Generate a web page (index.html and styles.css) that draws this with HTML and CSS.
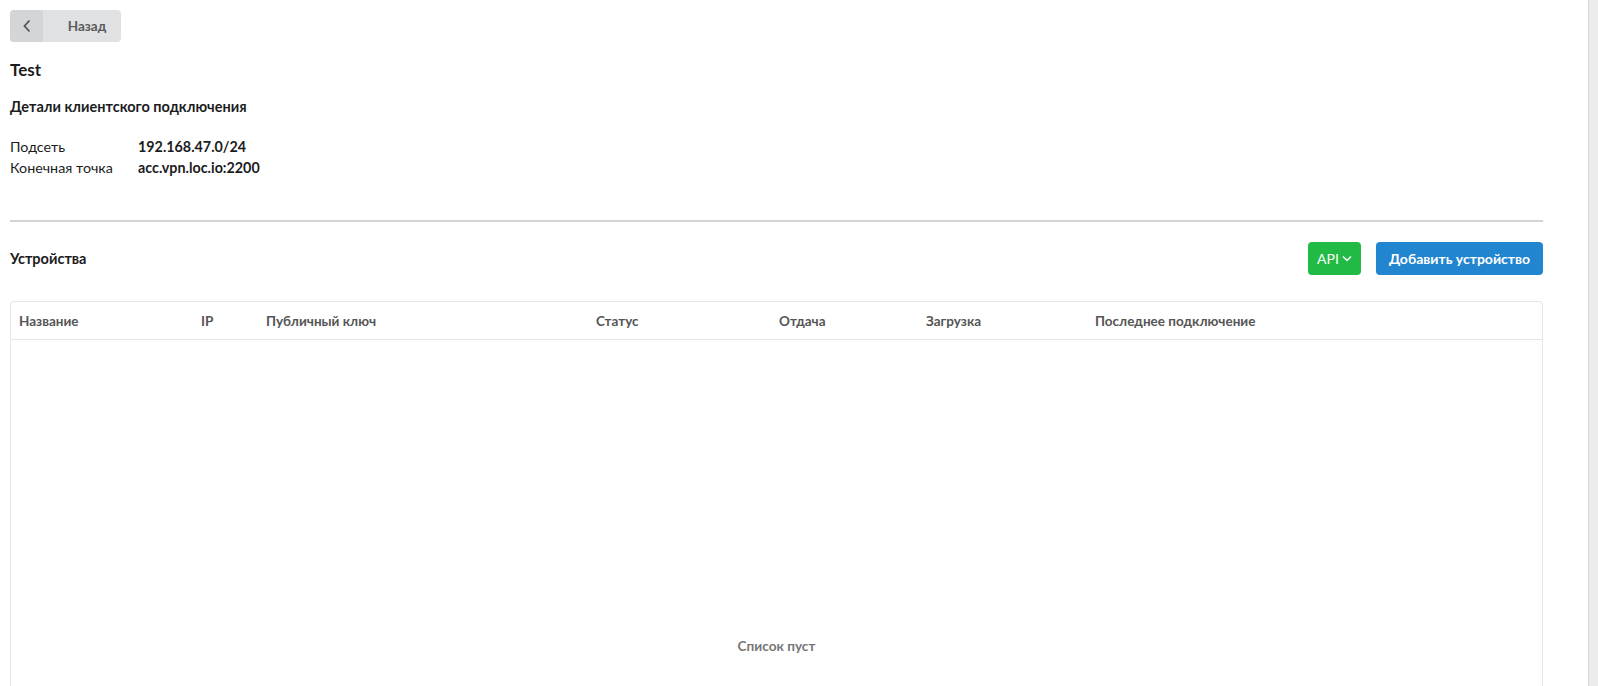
FILE: index.html
```html
<!DOCTYPE html>
<html lang="ru">
<head>
    <meta charset="UTF-8">
    <meta name="viewport" content="width=device-width, initial-scale=1.0">
    <title>Test</title>
    <link rel="stylesheet" href="styles.css">
</head>
<body>
    <div class="page">
        <button class="back-button">
            <span class="back-icon">
                <svg width="10" height="14" viewBox="0 0 10 14"><path d="M7.5 1.5 L2.5 7 L7.5 12.5" fill="none" stroke="#555" stroke-width="1.8"/></svg>
            </span>
            <span class="back-text">Назад</span>
        </button>

        <h1 class="title">Test</h1>
        <h2 class="subtitle">Детали клиентского подключения</h2>

        <div class="details">
            <div class="detail-row">
                <span class="detail-label">Подсеть</span>
                <span class="detail-value">192.168.47.0/24</span>
            </div>
            <div class="detail-row">
                <span class="detail-label">Конечная точка</span>
                <span class="detail-value">acc.vpn.loc.io:2200</span>
            </div>
        </div>

        <hr class="divider">

        <div class="devices-header">
            <h2 class="devices-title">Устройства</h2>
            <div class="actions">
                <button class="api-button">API
                    <svg width="10" height="7" viewBox="0 0 10 7"><path d="M1 1.5 L5 5.5 L9 1.5" fill="none" stroke="#fff" stroke-width="1.5"/></svg>
                </button>
                <button class="add-button">Добавить устройство</button>
            </div>
        </div>

        <div class="table">
            <div class="table-head">
                <div>Название</div>
                <div>IP</div>
                <div>Публичный ключ</div>
                <div>Статус</div>
                <div>Отдача</div>
                <div>Загрузка</div>
                <div>Последнее подключение</div>
            </div>
            <div class="table-body">
                <div class="empty">Список пуст</div>
            </div>
        </div>
    </div>
    <div class="scroll-strip"></div>
</body>
</html>
```

FILE: styles.css
```css
html, body {
    height: 100%;
}

body {
    margin: 0;
    font-family: Lato, "Noto Sans", sans-serif;
    color: #1b1c1d;
    background-color: #fff;
    display: flex;
    overflow: hidden;
}

.page {
    flex: 1;
    padding: 10px 45px 0 10px;
    min-width: 0;
}

.scroll-strip {
    width: 9px;
    background-color: #ebebeb;
    border-left: 1px solid #d6d6d6;
}

.back-button {
    display: flex;
    align-items: stretch;
    height: 32px;
    width: 111px;
    padding: 0;
    border: none;
    border-radius: 4px;
    background-color: #e0e1e2;
    overflow: hidden;
    font-family: inherit;
    cursor: pointer;
}

.back-icon {
    width: 33px;
    background-color: #d4d5d6;
    display: flex;
    align-items: center;
    justify-content: center;
}

.back-text {
    flex: 1;
    display: flex;
    align-items: center;
    justify-content: center;
    padding-left: 10px;
    font-size: 13.5px;
    font-weight: bold;
    color: #5a5a5a;
}

.title {
    margin: 18px 0 0;
    font-size: 17px;
    line-height: 20px;
    font-weight: bold;
}

.subtitle {
    margin: 18px 0 0;
    font-size: 14.5px;
    line-height: 18px;
    font-weight: bold;
}

.details {
    margin-top: 20px;
    font-size: 14.3px;
    line-height: 21px;
}

.detail-row {
    display: flex;
}

.detail-label {
    width: 128px;
}

.detail-value {
    font-weight: bold;
}

.divider {
    margin: 42px 0 0;
    border: none;
    height: 2px;
    background-color: #d4d4d5;
}

.devices-header {
    margin-top: 20px;
    display: flex;
    justify-content: space-between;
    align-items: center;
}

.devices-title {
    margin: 0;
    font-size: 14.5px;
    font-weight: bold;
}

.actions {
    display: flex;
    gap: 15px;
}

.api-button,
.add-button {
    height: 33px;
    border: none;
    border-radius: 4px;
    color: #fff;
    font-family: inherit;
    font-size: 14px;
    cursor: pointer;
}

.api-button {
    width: 53px;
    background-color: #21ba45;
    display: flex;
    align-items: center;
    justify-content: center;
    gap: 3px;
    padding: 0;
}

.add-button {
    width: 167px;
    background-color: #2185d0;
    font-weight: bold;
}

.table {
    margin-top: 26px;
    border: 1px solid #e3e6ee;
    border-bottom: none;
    border-radius: 4px 4px 0 0;
    height: 500px;
}

.table-head {
    display: grid;
    grid-template-columns: 182px 65px 330px 183px 147px 169px 1fr;
    height: 37px;
    align-items: center;
    padding-left: 8px;
    border-bottom: 1px solid #e3e6ee;
    font-size: 13.5px;
    font-weight: bold;
    color: #555;
}

.table-body {
    text-align: center;
}

.empty {
    padding-top: 298px;
    font-size: 13.6px;
    font-weight: bold;
    color: #767676;
}
```
